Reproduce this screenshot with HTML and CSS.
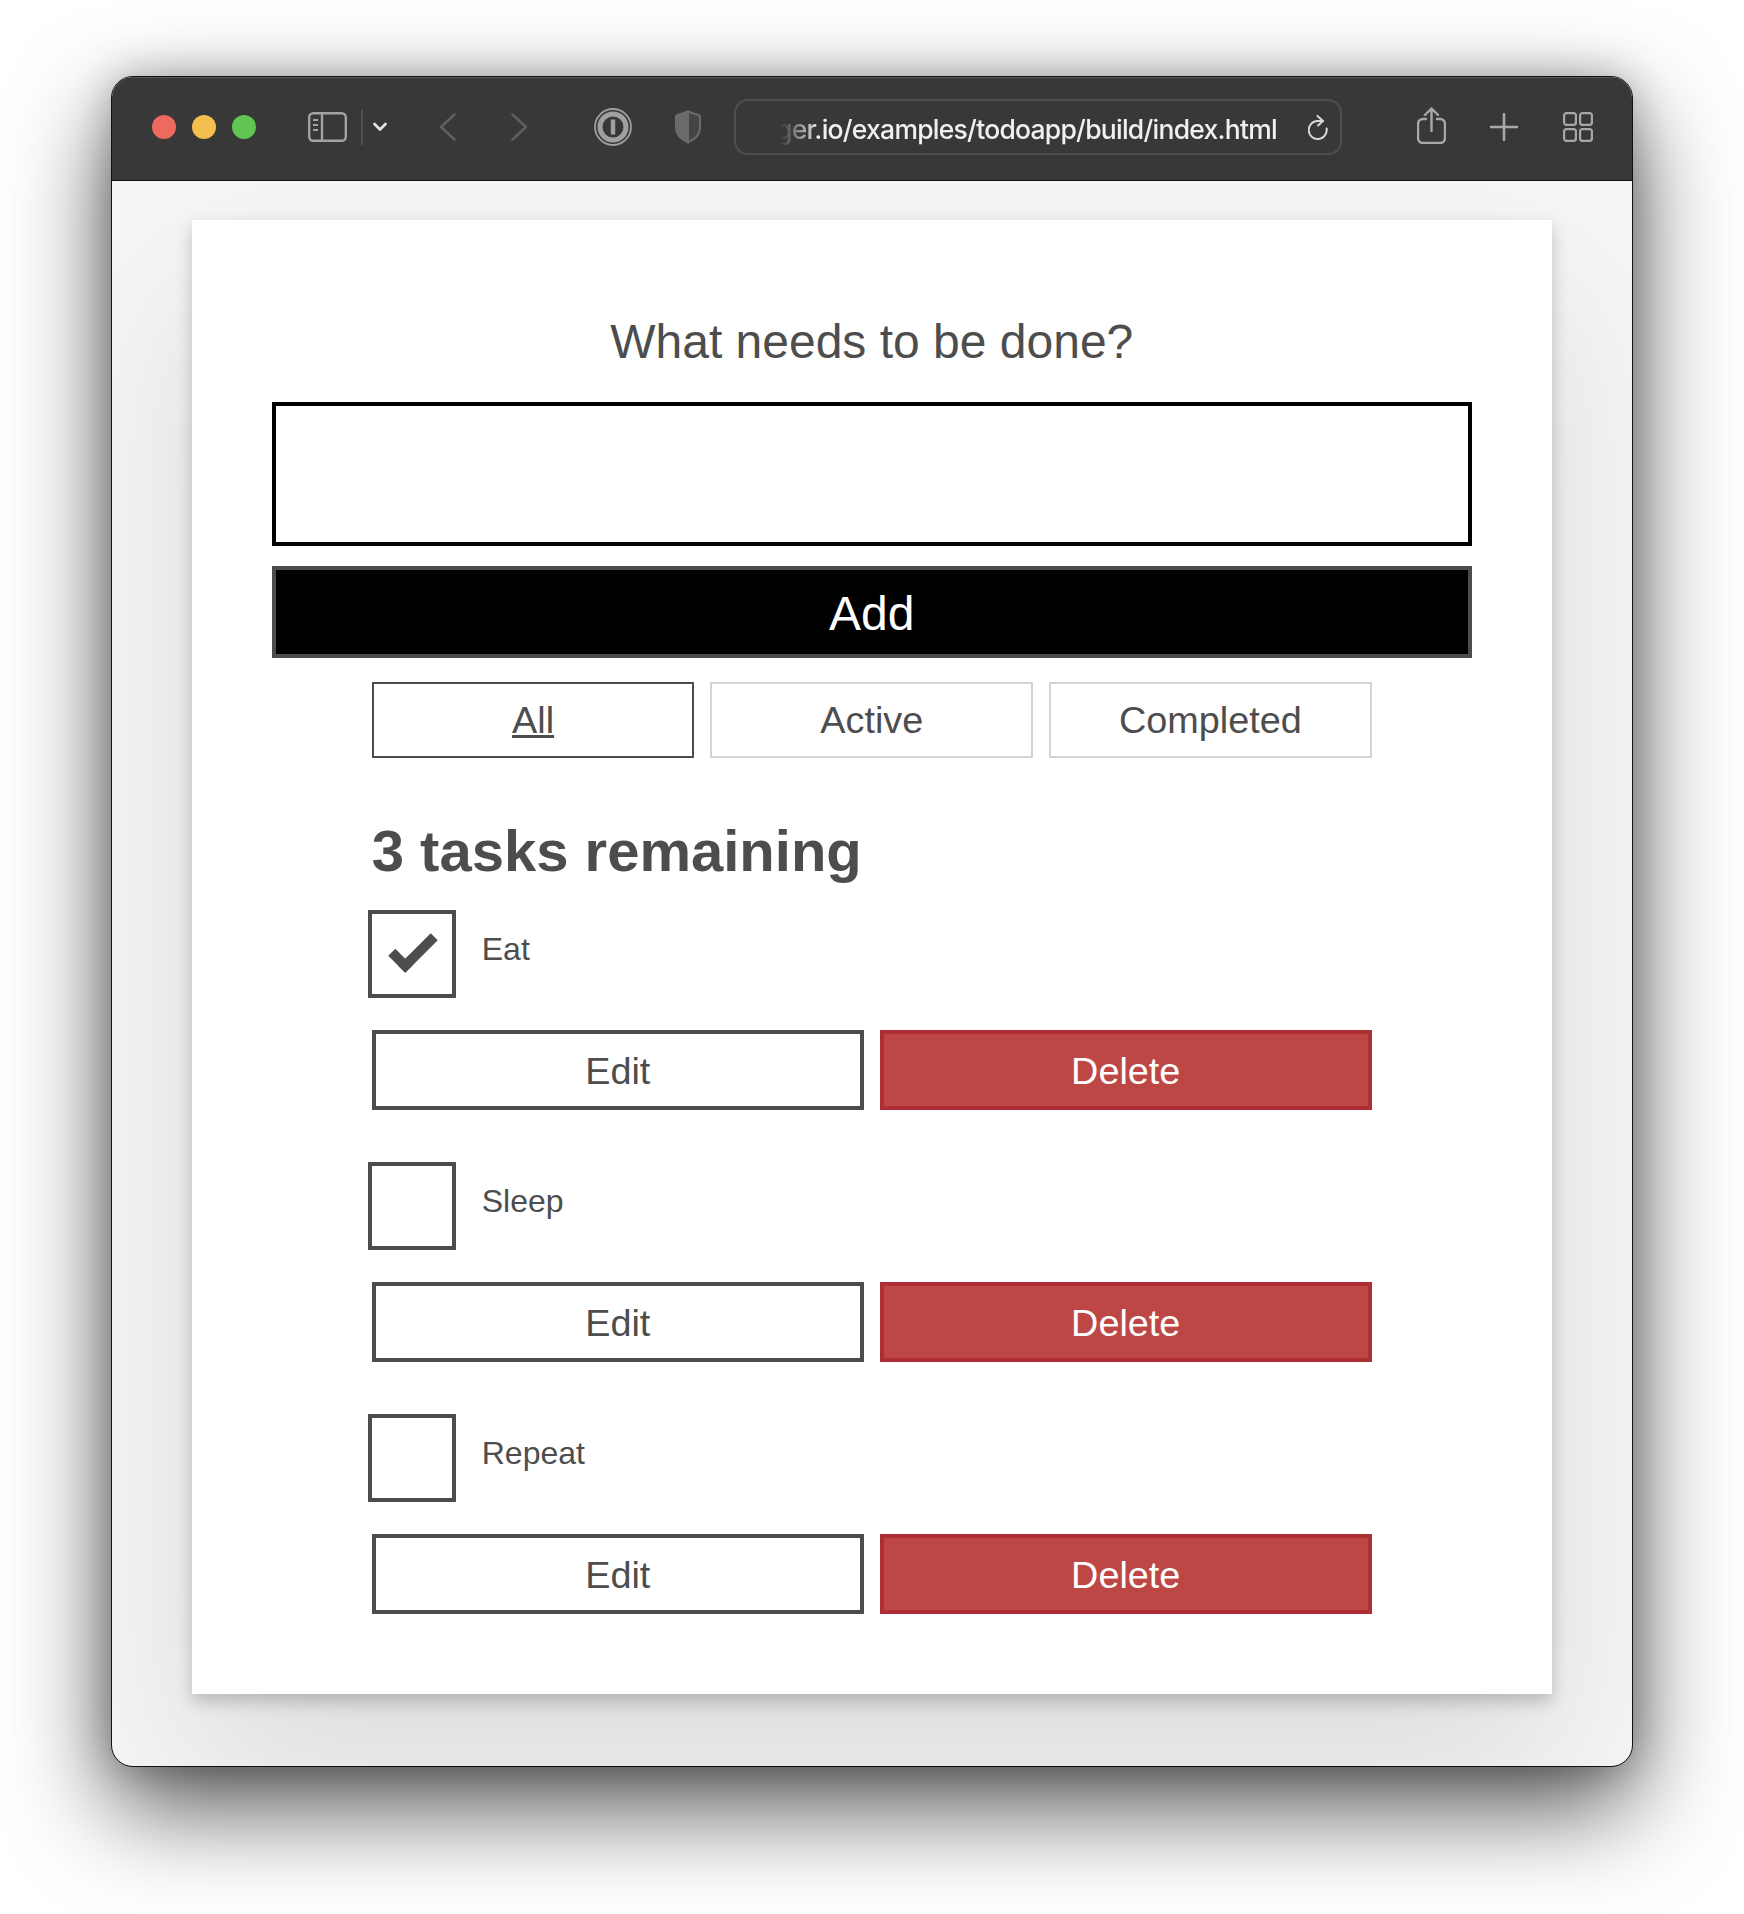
FILE: index.html
```html
<!DOCTYPE html>
<html>
<head>
	<meta name="viewport" content="width=device-width, initial-scale=1.0">
	<title>TodoMatic</title>
	<link rel="stylesheet" href="styles.css">
</head>
<body>
	<div class="window">
		<div class="toolbar">
			<span class="light red"></span>
			<span class="light yellow"></span>
			<span class="light green"></span>

			<svg class="ic-sidebar" viewBox="0 0 39 30" fill="none" stroke="#a3a3a3" stroke-width="2.4">
				<rect x="1.2" y="1.2" width="36.6" height="27.6" rx="4"/>
				<path d="M14 1v28"/>
				<path d="M5 8h5M5 13h5M5 18h5" stroke-width="2"/>
			</svg>
			<span class="divider"></span>
			<svg class="ic-chevron" viewBox="0 0 14 10" fill="none" stroke="#e6e6e6" stroke-width="2.6" stroke-linecap="round" stroke-linejoin="round">
				<path d="M1.5 2l5.5 5.5L12.5 2"/>
			</svg>
			<svg class="ic-back" viewBox="0 0 17 28" fill="none" stroke="#5e5e5e" stroke-width="2.6" stroke-linecap="round" stroke-linejoin="round">
				<path d="M15.5 1.5L2 14l13.5 12.5"/>
			</svg>
			<svg class="ic-forward" viewBox="0 0 17 28" fill="none" stroke="#5e5e5e" stroke-width="2.6" stroke-linecap="round" stroke-linejoin="round">
				<path d="M1.5 1.5L15 14 1.5 26.5"/>
			</svg>
			<svg class="ic-onepass" viewBox="0 0 38 38" fill="none" stroke="#a0a0a0">
				<circle cx="19" cy="19" r="18" stroke-width="1.8"/>
				<circle cx="19" cy="19" r="13" stroke-width="5"/>
				<path d="M19 11.5v15" stroke-width="4.4"/>
			</svg>
			<svg class="ic-shield" viewBox="0 0 28 34">
				<path d="M14 1.5L25 5.2a1.5 1.5 0 0 1 1 1.4V18c0 7-5.5 11.5-12 14.5V1.5z" fill="#454545" stroke="#6b6b6b" stroke-width="2" stroke-linejoin="round"/>
				<path d="M14 1.5L3 5.2a1.5 1.5 0 0 0-1 1.4V18c0 7 5.5 11.5 12 14.5V1.5z" fill="#6b6b6b" stroke="#6b6b6b" stroke-width="2" stroke-linejoin="round"/>
			</svg>

			<div class="urlbar">
				<span class="url">ger.io/examples/todoapp/build/index.html</span>
				<svg class="ic-reload" viewBox="0 0 20 25" fill="none" stroke="#d6d6d6" stroke-width="2" stroke-linecap="round" stroke-linejoin="round">
					<path d="M18.6 13.5A9 9 0 1 1 9.6 6H15"/>
					<path d="M9.5 1l5.5 5-5 4.5"/>
				</svg>
			</div>

			<svg class="ic-share" viewBox="0 0 29 37" fill="none" stroke="#a8a8a8" stroke-width="2.4" stroke-linecap="round" stroke-linejoin="round">
				<path d="M9 12H6a5 5 0 0 0-5 5v14a5 5 0 0 0 5 5h17a5 5 0 0 0 5-5V17a5 5 0 0 0-5-5h-3"/>
				<path d="M14.5 24V1.5M8 8l6.5-6.5L21 8"/>
			</svg>
			<svg class="ic-plus" viewBox="0 0 28 28" fill="none" stroke="#a8a8a8" stroke-width="2.6" stroke-linecap="round">
				<path d="M14 1v26M1 14h26"/>
			</svg>
			<svg class="ic-grid" viewBox="0 0 30 30" fill="none" stroke="#a8a8a8" stroke-width="2.2">
				<rect x="1.1" y="1.1" width="11.8" height="11.8" rx="2.4"/>
				<rect x="17.1" y="1.1" width="11.8" height="11.8" rx="2.4"/>
				<rect x="1.1" y="17.1" width="11.8" height="11.8" rx="2.4"/>
				<rect x="17.1" y="17.1" width="11.8" height="11.8" rx="2.4"/>
			</svg>
		</div>

		<div class="page">
			<div class="todoapp">
				<form onsubmit="event.preventDefault()" autocomplete="off">
					<h2 class="label-wrap"><label for="new-todo">What needs to be done?</label></h2>
					<input type="text" id="new-todo" class="new-input">
					<button class="btn btn-add">Add</button>
				</form>

				<div class="filters">
					<button class="btn filter active">All</button>
					<button class="btn filter">Active</button>
					<button class="btn filter">Completed</button>
				</div>

				<h2 class="list-heading">3 tasks remaining</h2>

				<ul class="todo-list">
					<li class="todo">
						<div class="check-row">
							<span class="checkbox checked"></span>
							<label class="todo-label">Eat</label>
						</div>
						<div class="btn-group">
							<button class="btn btn-edit">Edit</button>
							<button class="btn btn-delete">Delete</button>
						</div>
					</li>
					<li class="todo">
						<div class="check-row">
							<span class="checkbox"></span>
							<label class="todo-label">Sleep</label>
						</div>
						<div class="btn-group">
							<button class="btn btn-edit">Edit</button>
							<button class="btn btn-delete">Delete</button>
						</div>
					</li>
					<li class="todo">
						<div class="check-row">
							<span class="checkbox"></span>
							<label class="todo-label">Repeat</label>
						</div>
						<div class="btn-group">
							<button class="btn btn-edit">Edit</button>
							<button class="btn btn-delete">Delete</button>
						</div>
					</li>
				</ul>
			</div>
		</div>
	</div>
</body>
</html>
```

FILE: styles.css
```css
* {
    box-sizing: border-box;
}

html, body {
    margin: 0;
    height: 1914px;
    overflow: hidden;
    background: #fff;
}

body {
    padding: 76px 111px 0 111px;
    font-family: "Liberation Sans", Arial, sans-serif;
    color: #4d4d4d;
}

/* browser window */
.window {
    height: 1691px;
    border: 1.5px solid #111;
    border-radius: 22px;
    overflow: hidden;
    background: #f5f5f5;
    box-shadow: 0 40px 100px rgba(0, 0, 0, .68), 0 0 40px rgba(0, 0, 0, .25);
}

.toolbar {
    display: flex;
    align-items: center;
    height: 104px;
    padding-left: 40px;
    padding-bottom: 3px;
    background: #383838;
    border-bottom: 1px solid #111;
    box-shadow: inset 0 1px 0 #5a5a5a;
}

.toolbar svg {
    flex: none;
    display: block;
}

.light {
    flex: none;
    width: 24px;
    height: 24px;
    border-radius: 50%;
    margin-right: 16px;
}

.red { background: #ee6a5f; }
.yellow { background: #f5bf4f; }
.green { background: #61c554; }

.ic-sidebar { width: 39px; height: 30px; margin-left: 36px; }
.divider { flex: none; width: 2px; height: 36px; margin-left: 14px; background: #4f4f4f; }
.ic-chevron { width: 14px; height: 10px; margin-left: 10px; }
.ic-back { width: 17px; height: 28px; margin-left: 52px; }
.ic-forward { width: 17px; height: 28px; margin-left: 55px; }
.ic-onepass { width: 38px; height: 38px; margin-left: 66px; }
.ic-shield { width: 28px; height: 34px; margin-left: 42px; }

.urlbar {
    flex: none;
    display: flex;
    align-items: center;
    justify-content: flex-end;
    width: 608px;
    height: 56px;
    margin-left: 32px;
    padding-right: 12px;
    border: 2px solid #4e4e4e;
    border-radius: 14px;
}

.url {
    padding-top: 4px;
    font-family: Inter, "Liberation Sans", sans-serif;
    font-size: 26.5px;
    font-weight: 500;
    letter-spacing: -0.75px;
    color: #f0f0f0;
    white-space: nowrap;
    -webkit-mask-image: linear-gradient(to right, transparent 4px, #000 44px);
    mask-image: linear-gradient(to right, transparent 4px, #000 44px);
}

.ic-reload { width: 20px; height: 25px; margin-left: 31px; }
.ic-share { width: 29px; height: 37px; margin: 0 0 3px 75px; }
.ic-plus { width: 28px; height: 28px; margin-left: 44px; }
.ic-grid { width: 30px; height: 30px; margin-left: 45px; }

/* todo page */
.page {
    padding: 39px 0 0 79.5px;
}

.todoapp {
    width: 1360.5px;
    height: 1474px;
    padding: 92px 80px 0;
    background: #fff;
    box-shadow: 0 8px 16px 0 rgba(0, 0, 0, .2), 0 80px 160px 0 rgba(0, 0, 0, .1);
}

.label-wrap {
    margin: 0 0 30px;
    font-size: 48px;
    font-weight: normal;
    line-height: 60px;
    text-align: center;
}

.new-input {
    display: block;
    width: 100%;
    height: 144px;
    border: 4px solid #000;
    border-radius: 0;
    background: #fff;
    outline: none;
}

.btn {
    font-family: "Liberation Sans", Arial, sans-serif;
    font-size: 37.8px;
    line-height: 1.25;
    color: #4d4d4d;
    background: #fff;
    border: 4px solid #4d4d4d;
    border-radius: 0;
    padding: 3px 0 0;
    cursor: pointer;
}

.btn-add {
    display: block;
    width: 100%;
    height: 92px;
    margin-top: 20px;
    padding-top: 3px;
    font-size: 48px;
    color: #fff;
    background: #000;
}

.filters {
    display: flex;
    gap: 16px;
    width: 1000px;
    margin: 24px auto 0;
}

.filter {
    flex: 1;
    height: 76px;
    padding-top: 2px;
    border: 2px solid #d3d3d3;
}

.filter.active {
    border-color: #4d4d4d;
    text-decoration: underline;
}

.list-heading {
    width: 1000px;
    margin: 58px auto 24px;
    font-size: 58px;
    font-weight: bold;
    line-height: 70px;
}

.todo-list {
    width: 1000px;
    margin: 0 auto;
    padding: 0;
    list-style: none;
}

.todo {
    margin-bottom: 52px;
}

.check-row {
    display: flex;
    align-items: flex-start;
    margin-left: -4px;
}

.checkbox {
    position: relative;
    flex: none;
    width: 88px;
    height: 88px;
    border: 4px solid #4d4d4d;
    background: #fff;
}

.checked::after {
    content: "";
    position: absolute;
    left: 18px;
    top: 22px;
    width: 36px;
    height: 14px;
    box-sizing: content-box;
    border: solid #4d4d4d;
    border-width: 0 0 10px 10px;
    transform: rotate(-45deg);
}

.todo-label {
    padding: 18.5px 0 0 26px;
    font-size: 32px;
    line-height: 40px;
}

.btn-group {
    display: flex;
    gap: 16px;
    margin-top: 32px;
}

.btn-edit, .btn-delete {
    flex: 1;
    height: 80px;
}

.btn-delete {
    color: #fff;
    background: #bc4745;
    border-color: #ae2e35;
}
```
